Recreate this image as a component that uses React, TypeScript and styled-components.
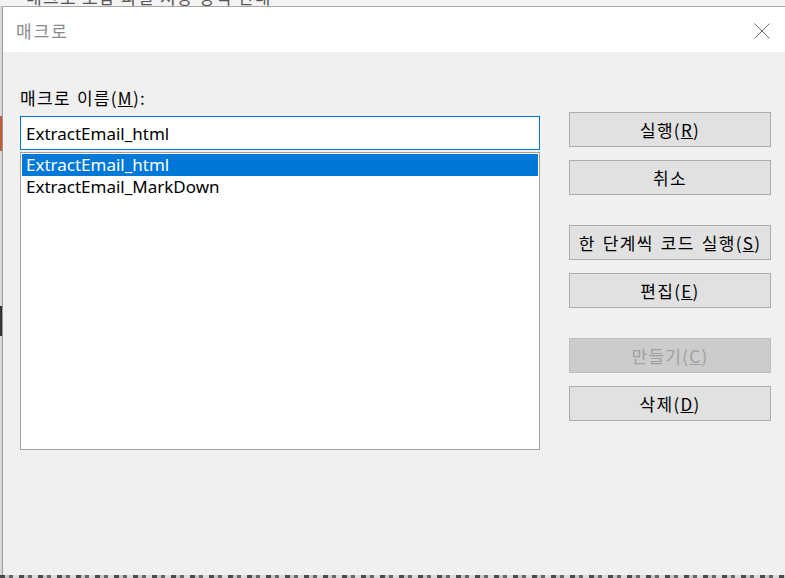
import React from "react";
import styled, { createGlobalStyle } from "styled-components";

const GlobalStyle = createGlobalStyle`
  html, body {
    margin: 0;
    padding: 0;
    background: #f3f3f3;
  }
  body {
    font-family: "Noto Sans", "Noto Sans CJK KR", sans-serif;
  }
`;

interface ButtonDef {
  label: string;
  key?: string;
  gap: number;
  disabled?: boolean;
}

const buttons: ButtonDef[] = [
  { label: "실행", key: "R", gap: 0 },
  { label: "취소", gap: 13 },
  { label: "한 단계씩 코드 실행", key: "S", gap: 30 },
  { label: "편집", key: "E", gap: 13 },
  { label: "만들기", key: "C", gap: 30, disabled: true },
  { label: "삭제", key: "D", gap: 13 },
];

const macros = ["ExtractEmail_html", "ExtractEmail_MarkDown"];

const App: React.FC = () => {
  return (
    <Desktop>
      <GlobalStyle />
      <BackdropTop>
        <BackdropText>매크로 포함 파일 저장 방식 안내</BackdropText>
      </BackdropTop>
      <Middle>
        <BackdropLeft />
        <Window>
          <TitleBar>
            <Title>매크로</Title>
            <CloseButton aria-label="닫기">
              <svg width="16" height="16" viewBox="0 0 16 16">
                <path
                  d="M0.5 0.5 L15.5 15.5 M15.5 0.5 L0.5 15.5"
                  stroke="#6f6f6f"
                  strokeWidth="1"
                  fill="none"
                />
              </svg>
            </CloseButton>
          </TitleBar>
          <Body>
            <LeftColumn>
              <FieldLabel>
                매크로 이름(<u>M</u>):
              </FieldLabel>
              <NameInput defaultValue="ExtractEmail_html" />
              <MacroList>
                {macros.map((m, i) => (
                  <MacroItem key={m} selected={i === 0}>
                    {m}
                  </MacroItem>
                ))}
              </MacroList>
            </LeftColumn>
            <RightColumn>
              {buttons.map((b) => (
                <DialogButton
                  key={b.label}
                  gap={b.gap}
                  disabled={b.disabled}
                >
                  {b.label}
                  {b.key && (
                    <>
                      (<u>{b.key}</u>)
                    </>
                  )}
                </DialogButton>
              ))}
            </RightColumn>
          </Body>
        </Window>
      </Middle>
      <BackdropBottom />
    </Desktop>
  );
};

const Desktop = styled.div`
  width: 785px;
  height: 578px;
  overflow: hidden;
  display: flex;
  flex-direction: column;
  background: #f3f3f3;
`;

const BackdropTop = styled.div`
  height: 6px;
  overflow: hidden;
  padding-left: 26px;
`;

const BackdropText = styled.div`
  margin-top: -12px;
  font-family: "Noto Sans CJK KR", sans-serif;
  font-size: 17px;
  line-height: 18px;
  letter-spacing: 1.3px;
  color: #555;
  white-space: nowrap;
`;

const Middle = styled.div`
  flex: 1;
  display: flex;
  min-height: 0;
`;

const BackdropLeft = styled.div`
  width: 2px;
  background: linear-gradient(
    to bottom,
    #d9d9d9 0 110px,
    #c9573a 110px 145px,
    #d9d9d9 145px 300px,
    #333 300px 330px,
    #d9d9d9 330px
  );
`;

const Window = styled.div`
  flex: 1;
  display: flex;
  flex-direction: column;
  border-top: 1px solid #a9a9a9;
  border-left: 1px solid #9a9a9a;
  background: #f0f0f0;
`;

const TitleBar = styled.div`
  height: 45px;
  background: #ffffff;
  display: flex;
  align-items: center;
  justify-content: space-between;
  padding: 0 15px 0 13px;
`;

const Title = styled.span`
  font-family: "Noto Sans CJK KR", sans-serif;
  font-size: 17px;
  letter-spacing: 2px;
  color: #8a8a8a;
  margin-top: 1px;
`;

const CloseButton = styled.div`
  width: 16px;
  height: 16px;
  display: flex;
  margin-top: 2px;
`;

const Body = styled.div`
  flex: 1;
  display: flex;
  padding: 35px 0 0 17px;
`;

const LeftColumn = styled.div`
  width: 520px;
  display: flex;
  flex-direction: column;
`;

const FieldLabel = styled.div`
  font-size: 17px;
  line-height: 22px;
  letter-spacing: 1.3px;
  word-spacing: 1px;
  color: #000;
  font-family: "Noto Sans CJK KR", sans-serif;
`;

const NameInput = styled.input`
  margin-top: 7px;
  height: 34px;
  box-sizing: border-box;
  border: 1px solid #0078d7;
  padding: 0 5px;
  font-family: "Noto Sans", "Noto Sans CJK KR", sans-serif;
  font-size: 17px;
  color: #000;
  outline: none;
  background: #fff;
`;

const MacroList = styled.div`
  margin-top: 2px;
  height: 298px;
  box-sizing: border-box;
  border: 1px solid #a0a0a0;
  background: #fff;
  padding: 1px;
`;

const MacroItem = styled.div<{ selected?: boolean }>`
  height: 22px;
  line-height: 22px;
  padding-left: 4px;
  font-size: 17px;
  color: ${(p) => (p.selected ? "#ffffff" : "#000000")};
  background: ${(p) => (p.selected ? "#0078d7" : "transparent")};
`;

const RightColumn = styled.div`
  margin-left: 29px;
  width: 202px;
  display: flex;
  flex-direction: column;
  padding-top: 25px;
`;

const DialogButton = styled.button<{ gap: number }>`
  margin-top: ${(p) => p.gap}px;
  height: 35px;
  box-sizing: border-box;
  border: 1px solid ${(p) => (p.disabled ? "#bfbfbf" : "#adadad")};
  background: ${(p) => (p.disabled ? "#cccccc" : "#e1e1e1")};
  color: ${(p) => (p.disabled ? "#a0a0a0" : "#000")};
  font-family: "Noto Sans CJK KR", sans-serif;
  font-size: 17px;
  letter-spacing: 1.3px;
  word-spacing: 2px;
  padding: 0;
`;

const BackdropBottom = styled.div`
  height: 3px;
  background: repeating-linear-gradient(
    to right,
    #4a4a4a 0 5px,
    #c8c8c8 5px 9px,
    #666 9px 13px,
    #dcdcdc 13px 19px
  );
`;

export default App;
